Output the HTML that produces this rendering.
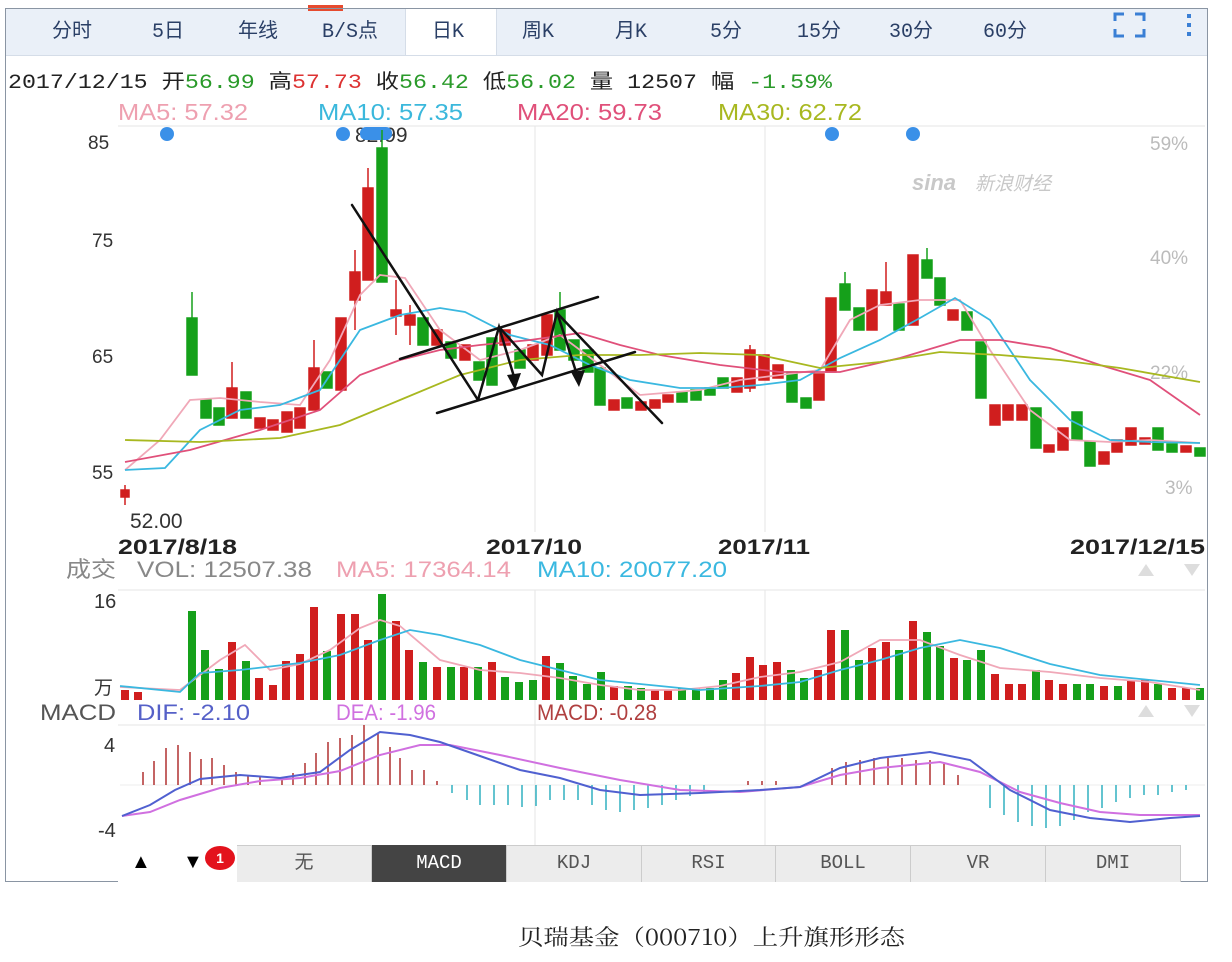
<!DOCTYPE html>
<html><head><meta charset="utf-8"><style>
body{margin:0;width:1232px;height:962px;background:#fff;overflow:hidden;font-family:"Liberation Sans","Noto Sans CJK SC",sans-serif;position:relative}
.frame{position:absolute;left:5px;top:8px;width:1203px;height:874px;border:1px solid #8a95a3;box-sizing:border-box}
.top{position:absolute;left:6px;top:9px;width:1201px;height:46px;background:#eaf0f8;border-bottom:1px solid #d5dde8}
.tab{position:absolute;top:14px;font-size:20px;color:#2a3f66;font-family:"Liberation Mono","Noto Sans CJK SC",monospace}
.t{position:absolute;white-space:nowrap}
.bt{position:absolute;top:0;height:37px;line-height:37px;text-align:center;font-size:19px;color:#555;font-family:"Liberation Mono","Noto Sans CJK SC",monospace;border-right:1px solid #ccc;box-sizing:border-box}
</style></head><body>
<div class="top"></div>
<div style="position:absolute;left:405px;top:9px;width:90px;height:46px;background:#fff;border-left:1px solid #d5dde8;border-right:1px solid #d5dde8"></div>
<div style="position:absolute;left:308px;top:5px;width:35px;height:6px;background:#e64a2e"></div>
<span class="tab" style="left:52px">分时</span>
<span class="tab" style="left:152px">5日</span>
<span class="tab" style="left:238px">年线</span>
<span class="tab" style="left:322px">B/S点</span>
<span class="tab" style="left:432px">日K</span>
<span class="tab" style="left:522px">周K</span>
<span class="tab" style="left:615px">月K</span>
<span class="tab" style="left:710px">5分</span>
<span class="tab" style="left:797px">15分</span>
<span class="tab" style="left:889px">30分</span>
<span class="tab" style="left:983px">60分</span>
<svg style="position:absolute;left:1112px;top:10px" width="90" height="30"><path d="M3 11V4h9M23 4h9v7M3 19v7h9M23 26h9v-7" stroke="#3a7fd5" stroke-width="3" fill="none"/><rect x="75" y="4" width="4" height="4" fill="#3a7fd5"/><rect x="75" y="13" width="4" height="4" fill="#3a7fd5"/><rect x="75" y="22" width="4" height="4" fill="#3a7fd5"/></svg>
<div class="frame"></div>

<svg style="position:absolute;left:0;top:0" width="1232" height="962">
<text x="8" y="88" font-size="20" font-family="Liberation Mono, Noto Sans CJK SC, monospace" fill="#222" textLength="824" lengthAdjust="spacingAndGlyphs">2017/12/15 开<tspan fill="#2a9a2a">56.99</tspan> 高<tspan fill="#d33">57.73</tspan> 收<tspan fill="#2a9a2a">56.42</tspan> 低<tspan fill="#2a9a2a">56.02</tspan> 量 12507 幅 <tspan fill="#2a9a2a">-1.59%</tspan></text>
<g font-size="23">
<text x="118" y="120" fill="#eea0b0" textLength="130" lengthAdjust="spacingAndGlyphs">MA5: 57.32</text>
<text x="318" y="120" fill="#3bb8dc" textLength="145" lengthAdjust="spacingAndGlyphs">MA10: 57.35</text>
<text x="517" y="120" fill="#e0507a" textLength="145" lengthAdjust="spacingAndGlyphs">MA20: 59.73</text>
<text x="718" y="120" fill="#a8b820" textLength="144" lengthAdjust="spacingAndGlyphs">MA30: 62.72</text>
</g>
<g stroke="#e6e6e6" stroke-width="1">
<line x1="118" y1="126" x2="1205" y2="126"/><line x1="118" y1="590" x2="1205" y2="590"/><line x1="118" y1="725" x2="1205" y2="725"/>
<line x1="535" y1="126" x2="535" y2="532"/><line x1="765" y1="126" x2="765" y2="532"/>
<line x1="535" y1="590" x2="535" y2="845"/><line x1="765" y1="590" x2="765" y2="845"/>
</g>
<g font-size="19" font-family="Liberation Sans"><text x="1150" y="150" fill="#bbb">59%</text><text x="1150" y="264" fill="#bbb">40%</text><text x="1150" y="379" fill="#bbb">22%</text><text x="1165" y="494" fill="#bbb">3%</text></g>
<g fill="#333" font-size="19"><text x="88" y="149">85</text><text x="92" y="247">75</text><text x="92" y="363">65</text><text x="92" y="479">55</text><text x="130" y="528" font-size="21">52.00</text><text x="355" y="142" font-size="21">82.99</text></g>
<g fill="#3a90e8"><circle cx="167" cy="134" r="7"/><circle cx="343" cy="134" r="7"/><rect x="360" y="127" width="32" height="13" rx="6"/><circle cx="832" cy="134" r="7"/><circle cx="913" cy="134" r="7"/></g>
<text x="912" y="190" fill="#c8c8c8" font-size="22" font-style="italic" font-weight="bold">sina</text><text x="975" y="190" fill="#c8c8c8" font-size="19" font-style="italic" font-family="Noto Sans CJK SC">新浪财经</text>
<g stroke-width="1.5">
<g fill="#d01e1e" stroke="#d01e1e">
<line x1="125" y1="485" x2="125" y2="505"/><rect x="121" y="490" width="8" height="7"/>
<line x1="232" y1="362" x2="232" y2="418"/><rect x="227" y="388" width="10" height="30"/>
<rect x="255" y="418" width="10" height="10"/><rect x="268" y="420" width="10" height="10"/><rect x="282" y="412" width="10" height="20"/><rect x="295" y="408" width="10" height="20"/>
<line x1="314" y1="340" x2="314" y2="410"/><rect x="309" y="368" width="10" height="42"/>
<rect x="336" y="318" width="10" height="72"/><line x1="355" y1="250" x2="355" y2="330"/><rect x="350" y="272" width="10" height="28"/>
<line x1="368" y1="168" x2="368" y2="280"/><rect x="363" y="188" width="10" height="92"/>
<line x1="396" y1="280" x2="396" y2="335"/><rect x="391" y="310" width="10" height="6"/><line x1="410" y1="305" x2="410" y2="345"/><rect x="405" y="315" width="10" height="10"/><rect x="432" y="330" width="10" height="15"/><rect x="460" y="345" width="10" height="15"/>
<rect x="500" y="330" width="10" height="15"/><rect x="528" y="345" width="10" height="15"/><rect x="542" y="315" width="10" height="40"/>
<rect x="609" y="400" width="10" height="10"/><rect x="636" y="402" width="10" height="8"/><rect x="650" y="400" width="10" height="8"/><rect x="663" y="395" width="10" height="7"/>
<rect x="732" y="378" width="10" height="14"/><line x1="750" y1="345" x2="750" y2="392"/><rect x="745" y="350" width="10" height="38"/><rect x="759" y="355" width="10" height="25"/><rect x="773" y="365" width="10" height="13"/><rect x="814" y="374" width="10" height="26"/>
<rect x="826" y="298" width="10" height="74"/><rect x="867" y="290" width="10" height="40"/><line x1="886" y1="262" x2="886" y2="305"/><rect x="881" y="292" width="10" height="13"/><rect x="908" y="255" width="10" height="70"/><rect x="948" y="310" width="10" height="10"/>
<rect x="990" y="405" width="10" height="20"/><rect x="1003" y="405" width="10" height="15"/><rect x="1017" y="405" width="10" height="15"/><rect x="1044" y="445" width="10" height="7"/><rect x="1058" y="428" width="10" height="22"/>
<rect x="1099" y="452" width="10" height="12"/><rect x="1112" y="440" width="10" height="12"/><rect x="1126" y="428" width="10" height="17"/><rect x="1140" y="438" width="10" height="6"/><rect x="1181" y="446" width="10" height="6"/>
</g>
<g fill="#15a01a" stroke="#15a01a">
<line x1="192" y1="292" x2="192" y2="375"/><rect x="187" y="318" width="10" height="57"/><rect x="201" y="400" width="10" height="18"/><rect x="214" y="408" width="10" height="17"/><rect x="241" y="392" width="10" height="26"/>
<rect x="322" y="372" width="10" height="16"/><line x1="382" y1="130" x2="382" y2="282"/><rect x="377" y="148" width="10" height="134"/><rect x="418" y="318" width="10" height="27"/><rect x="446" y="342" width="10" height="16"/><rect x="474" y="362" width="10" height="18"/><rect x="487" y="338" width="10" height="47"/><rect x="515" y="350" width="10" height="18"/>
<line x1="560" y1="292" x2="560" y2="350"/><rect x="555" y="310" width="10" height="40"/><rect x="569" y="340" width="10" height="20"/><rect x="583" y="350" width="10" height="22"/><rect x="595" y="368" width="10" height="37"/><rect x="622" y="398" width="10" height="10"/>
<rect x="677" y="392" width="10" height="10"/><rect x="691" y="390" width="10" height="10"/><rect x="705" y="388" width="10" height="7"/><rect x="718" y="378" width="10" height="10"/><rect x="787" y="372" width="10" height="30"/><rect x="801" y="398" width="10" height="10"/>
<line x1="845" y1="272" x2="845" y2="310"/><rect x="840" y="284" width="10" height="26"/><rect x="854" y="308" width="10" height="22"/><rect x="894" y="304" width="10" height="26"/><line x1="927" y1="248" x2="927" y2="278"/><rect x="922" y="260" width="10" height="18"/><rect x="935" y="278" width="10" height="27"/><rect x="962" y="312" width="10" height="18"/><rect x="976" y="342" width="10" height="56"/>
<rect x="1031" y="408" width="10" height="40"/><rect x="1072" y="412" width="10" height="28"/><rect x="1085" y="442" width="10" height="24"/><rect x="1153" y="428" width="10" height="22"/><rect x="1167" y="444" width="10" height="8"/><rect x="1195" y="448" width="10" height="8"/>
</g></g>
<g fill="none" stroke-width="1.8">
<polyline stroke="#f0a8b8" points="125,470 160,440 190,400 220,398 260,402 300,405 330,360 360,295 380,275 405,278 440,330 480,360 520,350 560,335 600,365 640,395 700,390 740,380 780,375 820,370 850,320 880,305 920,300 960,300 990,350 1030,410 1070,440 1110,442 1150,440 1200,443"/>
<polyline stroke="#3ab8e0" points="125,470 165,468 200,430 240,410 280,405 320,390 360,330 400,315 440,308 465,312 510,335 550,345 590,365 630,380 680,388 720,388 760,385 800,380 840,358 880,340 920,318 955,298 990,320 1030,380 1070,420 1110,440 1150,442 1200,443"/>
<polyline stroke="#e0507a" points="125,462 190,450 260,430 320,410 360,375 400,360 440,350 480,345 530,340 580,333 620,345 660,355 720,365 780,372 840,372 900,358 960,340 1000,340 1050,348 1100,365 1150,380 1200,415"/>
<polyline stroke="#a8b820" points="125,440 200,442 280,438 340,425 400,400 460,375 520,360 580,355 640,355 700,353 760,355 820,368 880,362 940,352 1000,355 1060,360 1120,368 1200,382"/>
</g>
<g stroke="#111" stroke-width="2.5" fill="none" stroke-linecap="round">
<line x1="352" y1="205" x2="478" y2="400"/>
<line x1="400" y1="359" x2="598" y2="297"/>
<line x1="437" y1="413" x2="635" y2="352"/>
<polyline points="478,400 499,327 515,380"/>
<polyline points="499,327 542,375 557,312 578,378"/>
<line x1="557" y1="313" x2="662" y2="423"/>
</g>
<g fill="#111"><path d="M507 375l8 15 6-17z"/><path d="M571 372l8 15 6-17z"/></g>
<g fill="#222" font-size="21" font-weight="bold">
<text x="118" y="554" textLength="119" lengthAdjust="spacingAndGlyphs">2017/8/18</text>
<text x="486" y="554" textLength="96" lengthAdjust="spacingAndGlyphs">2017/10</text>
<text x="718" y="554" textLength="92" lengthAdjust="spacingAndGlyphs">2017/11</text>
<text x="1070" y="554" textLength="135" lengthAdjust="spacingAndGlyphs">2017/12/15</text></g>
<g font-size="22">
<text x="66" y="577" fill="#888" font-family="Noto Sans CJK SC" textLength="50" lengthAdjust="spacingAndGlyphs">成交</text>
<text x="137" y="577" fill="#888" textLength="175" lengthAdjust="spacingAndGlyphs">VOL: 12507.38</text>
<text x="336" y="577" fill="#eea0b0" textLength="175" lengthAdjust="spacingAndGlyphs">MA5: 17364.14</text>
<text x="537" y="577" fill="#3ab8e0" textLength="190" lengthAdjust="spacingAndGlyphs">MA10: 20077.20</text>
<text x="40" y="720" fill="#555" textLength="76" lengthAdjust="spacingAndGlyphs">MACD</text>
<text x="137" y="720" fill="#5560c8" textLength="113" lengthAdjust="spacingAndGlyphs">DIF: -2.10</text>
<text x="336" y="720" fill="#d070e0" textLength="100" lengthAdjust="spacingAndGlyphs">DEA: -1.96</text>
<text x="537" y="720" fill="#b04040" textLength="120" lengthAdjust="spacingAndGlyphs">MACD: -0.28</text>
</g>
<text x="94" y="608" fill="#333" font-size="20">16</text><text x="94" y="694" fill="#333" font-size="19" font-family="Noto Sans CJK SC">万</text>
<text x="104" y="752" fill="#333" font-size="20">4</text><text x="98" y="837" fill="#333" font-size="20">-4</text>
<g fill="#ddd"><path d="M1138 576l8-12 8 12z"/><path d="M1184 564l8 12 8-12z"/><path d="M1138 717l8-12 8 12z"/><path d="M1184 705l8 12 8-12z"/></g>
<g fill="#d01e1e">
<rect x="121" y="690" width="8" height="10"/><rect x="134" y="692" width="8" height="8"/><rect x="228" y="642" width="8" height="58"/><rect x="255" y="678" width="8" height="22"/><rect x="269" y="685" width="8" height="15"/><rect x="282" y="661" width="8" height="39"/><rect x="296" y="654" width="8" height="46"/><rect x="310" y="607" width="8" height="93"/><rect x="337" y="614" width="8" height="86"/><rect x="351" y="614" width="8" height="86"/><rect x="364" y="640" width="8" height="60"/><rect x="392" y="621" width="8" height="79"/><rect x="405" y="650" width="8" height="50"/><rect x="433" y="667" width="8" height="33"/><rect x="460" y="667" width="8" height="33"/><rect x="488" y="662" width="8" height="38"/><rect x="542" y="656" width="8" height="44"/><rect x="610" y="686" width="8" height="14"/><rect x="651" y="690" width="8" height="10"/><rect x="664" y="690" width="8" height="10"/><rect x="732" y="673" width="8" height="27"/><rect x="746" y="657" width="8" height="43"/><rect x="759" y="665" width="8" height="35"/><rect x="773" y="662" width="8" height="38"/><rect x="814" y="670" width="8" height="30"/><rect x="827" y="630" width="8" height="70"/><rect x="868" y="648" width="8" height="52"/><rect x="882" y="642" width="8" height="58"/><rect x="909" y="621" width="8" height="79"/><rect x="950" y="658" width="8" height="42"/><rect x="991" y="674" width="8" height="26"/><rect x="1005" y="684" width="8" height="16"/><rect x="1018" y="684" width="8" height="16"/><rect x="1045" y="680" width="8" height="20"/><rect x="1059" y="684" width="8" height="16"/><rect x="1100" y="686" width="8" height="14"/><rect x="1127" y="680" width="8" height="20"/><rect x="1141" y="680" width="8" height="20"/><rect x="1168" y="688" width="8" height="12"/><rect x="1182" y="688" width="8" height="12"/>
</g>
<g fill="#15a01a">
<rect x="188" y="611" width="8" height="89"/><rect x="201" y="650" width="8" height="50"/><rect x="215" y="669" width="8" height="31"/><rect x="242" y="661" width="8" height="39"/><rect x="323" y="651" width="8" height="49"/><rect x="378" y="594" width="8" height="106"/><rect x="419" y="662" width="8" height="38"/><rect x="447" y="667" width="8" height="33"/><rect x="474" y="667" width="8" height="33"/><rect x="501" y="677" width="8" height="23"/><rect x="515" y="682" width="8" height="18"/><rect x="529" y="680" width="8" height="20"/><rect x="556" y="663" width="8" height="37"/><rect x="569" y="676" width="8" height="24"/><rect x="583" y="684" width="8" height="16"/><rect x="597" y="672" width="8" height="28"/><rect x="624" y="686" width="8" height="14"/><rect x="637" y="688" width="8" height="12"/><rect x="678" y="688" width="8" height="12"/><rect x="692" y="688" width="8" height="12"/><rect x="706" y="688" width="8" height="12"/><rect x="719" y="680" width="8" height="20"/><rect x="787" y="670" width="8" height="30"/><rect x="800" y="678" width="8" height="22"/><rect x="841" y="630" width="8" height="70"/><rect x="855" y="660" width="8" height="40"/><rect x="895" y="650" width="8" height="50"/><rect x="923" y="632" width="8" height="68"/><rect x="936" y="646" width="8" height="54"/><rect x="963" y="660" width="8" height="40"/><rect x="977" y="650" width="8" height="50"/><rect x="1032" y="670" width="8" height="30"/><rect x="1073" y="684" width="8" height="16"/><rect x="1086" y="684" width="8" height="16"/><rect x="1114" y="686" width="8" height="14"/><rect x="1154" y="684" width="8" height="16"/><rect x="1196" y="688" width="8" height="12"/>
</g>
<g fill="none" stroke-width="1.8">
<polyline stroke="#f0a8b8" points="120,687 180,690 220,660 245,645 270,670 300,664 330,650 360,628 380,620 400,626 440,660 480,670 520,673 560,678 600,685 640,690 680,690 720,686 760,677 800,672 840,662 880,640 920,640 960,655 1000,668 1050,672 1100,678 1150,682 1200,690"/>
<polyline stroke="#3ab8e0" points="120,686 180,692 200,673 240,670 300,663 340,655 380,640 410,630 440,635 480,645 520,660 560,670 600,680 640,684 700,690 760,686 800,682 840,670 880,660 920,648 960,640 1000,648 1050,664 1100,675 1150,680 1200,685"/>
</g>
<line x1="120" y1="785" x2="1205" y2="785" stroke="#eee"/>
<g stroke="#b03030" stroke-width="1.5">
<line x1="143" y1="785" x2="143" y2="772"/><line x1="154" y1="785" x2="154" y2="761"/><line x1="166" y1="785" x2="166" y2="748"/><line x1="178" y1="785" x2="178" y2="745"/><line x1="190" y1="785" x2="190" y2="752"/><line x1="201" y1="785" x2="201" y2="759"/><line x1="212" y1="785" x2="212" y2="758"/><line x1="224" y1="785" x2="224" y2="765"/><line x1="236" y1="785" x2="236" y2="772"/><line x1="248" y1="785" x2="248" y2="776"/><line x1="260" y1="785" x2="260" y2="777"/><line x1="282" y1="785" x2="282" y2="777"/><line x1="293" y1="785" x2="293" y2="773"/><line x1="305" y1="785" x2="305" y2="763"/><line x1="316" y1="785" x2="316" y2="753"/><line x1="328" y1="785" x2="328" y2="742"/><line x1="340" y1="785" x2="340" y2="738"/><line x1="352" y1="785" x2="352" y2="735"/><line x1="364" y1="785" x2="364" y2="725"/><line x1="378" y1="785" x2="378" y2="734"/><line x1="390" y1="785" x2="390" y2="747"/><line x1="400" y1="785" x2="400" y2="758"/><line x1="412" y1="785" x2="412" y2="770"/><line x1="424" y1="785" x2="424" y2="770"/><line x1="437" y1="785" x2="437" y2="781"/><line x1="748" y1="785" x2="748" y2="781"/><line x1="762" y1="785" x2="762" y2="781"/><line x1="776" y1="785" x2="776" y2="781"/><line x1="832" y1="785" x2="832" y2="768"/><line x1="846" y1="785" x2="846" y2="762"/><line x1="860" y1="785" x2="860" y2="760"/><line x1="874" y1="785" x2="874" y2="758"/><line x1="888" y1="785" x2="888" y2="758"/><line x1="902" y1="785" x2="902" y2="758"/><line x1="916" y1="785" x2="916" y2="760"/><line x1="930" y1="785" x2="930" y2="760"/><line x1="944" y1="785" x2="944" y2="764"/><line x1="958" y1="785" x2="958" y2="775"/>
</g>
<g stroke="#30b0c0" stroke-width="1.5">
<line x1="452" y1="785" x2="452" y2="793"/><line x1="467" y1="785" x2="467" y2="800"/><line x1="480" y1="785" x2="480" y2="805"/><line x1="494" y1="785" x2="494" y2="805"/><line x1="508" y1="785" x2="508" y2="805"/><line x1="522" y1="785" x2="522" y2="807"/><line x1="536" y1="785" x2="536" y2="806"/><line x1="550" y1="785" x2="550" y2="800"/><line x1="564" y1="785" x2="564" y2="800"/><line x1="578" y1="785" x2="578" y2="800"/><line x1="592" y1="785" x2="592" y2="805"/><line x1="606" y1="785" x2="606" y2="810"/><line x1="620" y1="785" x2="620" y2="812"/><line x1="634" y1="785" x2="634" y2="810"/><line x1="648" y1="785" x2="648" y2="808"/><line x1="662" y1="785" x2="662" y2="805"/><line x1="676" y1="785" x2="676" y2="800"/><line x1="690" y1="785" x2="690" y2="796"/><line x1="704" y1="785" x2="704" y2="792"/><line x1="990" y1="785" x2="990" y2="808"/><line x1="1004" y1="785" x2="1004" y2="815"/><line x1="1018" y1="785" x2="1018" y2="822"/><line x1="1032" y1="785" x2="1032" y2="826"/><line x1="1046" y1="785" x2="1046" y2="828"/><line x1="1060" y1="785" x2="1060" y2="826"/><line x1="1074" y1="785" x2="1074" y2="820"/><line x1="1088" y1="785" x2="1088" y2="812"/><line x1="1102" y1="785" x2="1102" y2="808"/><line x1="1116" y1="785" x2="1116" y2="802"/><line x1="1130" y1="785" x2="1130" y2="798"/><line x1="1144" y1="785" x2="1144" y2="795"/><line x1="1158" y1="785" x2="1158" y2="795"/><line x1="1172" y1="785" x2="1172" y2="792"/><line x1="1186" y1="785" x2="1186" y2="790"/>
</g>
<g fill="none" stroke-width="2">
<polyline stroke="#d070e0" points="122,816 150,812 180,800 220,788 260,781 300,778 340,771 380,755 420,745 450,745 500,755 560,768 620,780 680,790 740,792 800,787 840,775 880,768 940,762 980,772 1020,792 1060,803 1100,812 1140,815 1200,815"/>
<polyline stroke="#5060d0" points="122,816 150,805 175,790 200,779 240,775 280,778 320,772 350,750 380,732 410,735 440,742 480,756 520,770 560,778 600,790 640,795 700,793 760,790 800,787 840,768 880,758 930,752 970,760 1010,790 1050,810 1090,818 1130,822 1170,818 1200,816"/>
</g>
<text x="518" y="945" fill="#222" font-size="22" font-family="Noto Serif CJK SC" textLength="387" lengthAdjust="spacingAndGlyphs">贝瑞基金（000710）上升旗形形态</text>
</svg>

<div style="position:absolute;left:118px;top:845px;width:120px;height:37px;background:#fff"></div>
<div class="t" style="left:131px;top:851px;font-size:20px">▲</div><div class="t" style="left:183px;top:851px;font-size:20px">▼</div>
<div style="position:absolute;left:205px;top:846px;width:30px;height:24px;border-radius:50%;background:#e3121c;color:#fff;font-size:14px;font-weight:bold;text-align:center;line-height:24px">1</div>
<div style="position:absolute;left:237px;top:845px;width:944px;height:37px;background:#ececec;border-top:1px solid #ccc;box-sizing:border-box"></div>
<div class="bt" style="left:237px;top:845px;width:135px">无</div>
<div class="bt" style="left:372px;top:845px;width:135px;background:#444;color:#fff">MACD</div>
<div class="bt" style="left:507px;top:845px;width:135px">KDJ</div>
<div class="bt" style="left:642px;top:845px;width:134px">RSI</div>
<div class="bt" style="left:776px;top:845px;width:135px">BOLL</div>
<div class="bt" style="left:911px;top:845px;width:135px">VR</div>
<div class="bt" style="left:1046px;top:845px;width:135px">DMI</div>
</body></html>
